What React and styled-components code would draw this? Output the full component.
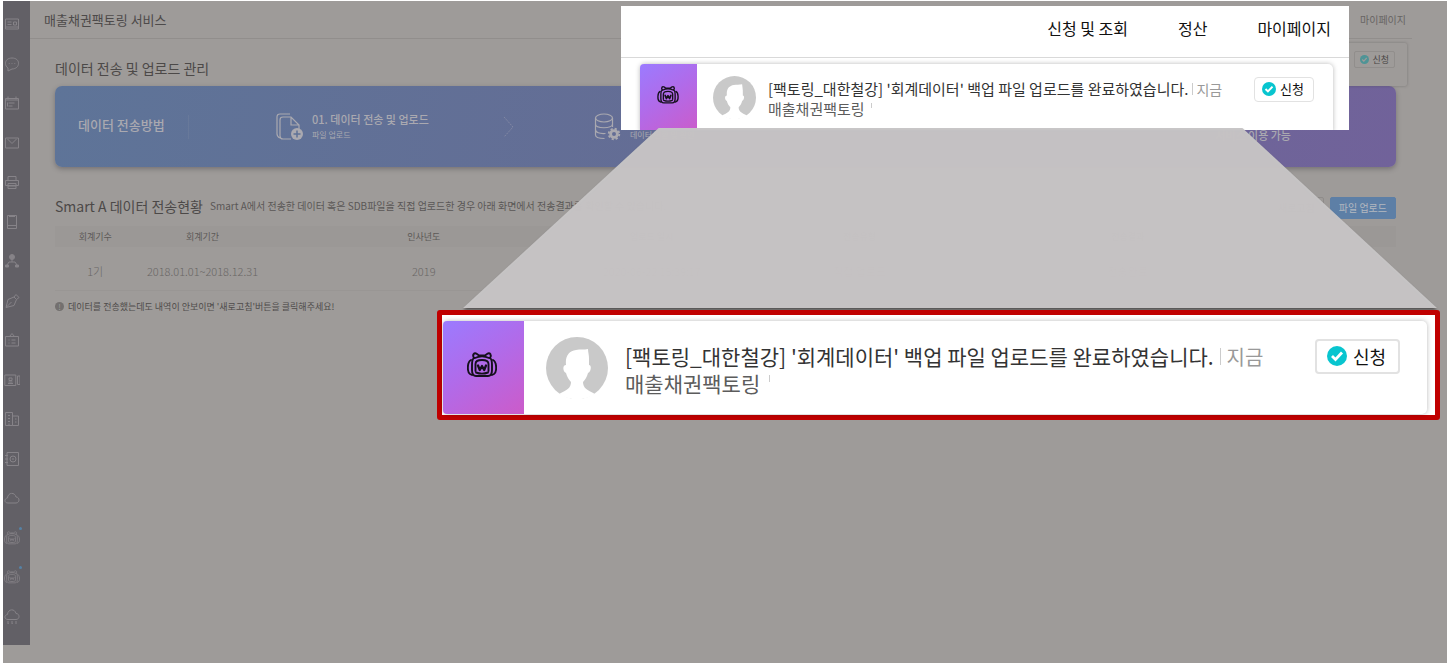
import React from "react";
import styled, { createGlobalStyle } from "styled-components";

const GlobalStyle = createGlobalStyle`
  * {
    box-sizing: border-box;
  }

  body {
    margin: 0;
    background: #fff;
    font-family: "Noto Sans CJK KR", "Noto Sans", sans-serif;
  }

  button {
    font-family: inherit;
    margin: 0;
  }
`;

const Page = styled.div`
  position: relative;
  display: flex;
  align-items: flex-start;
  min-height: calc(100vh - 1px);
  margin: 1px 1px 0 3px;
  background: #9e9b99;
  overflow: hidden;
`;

const Sidebar = styled.nav`
  display: flex;
  flex-direction: column;
  justify-content: space-between;
  flex: none;
  width: 27px;
  height: calc(100vh - 19px);
  padding: 15px 0 20px 1px;
  background: #626066;
`;

const SideLink = styled.a`
  position: relative;
  display: block;
  width: 17px;
  height: 16px;
  color: #868388;

  svg {
    display: block;
    width: 16px;
    height: 16px;
  }
`;

const Dot = styled.span`
  position: absolute;
  top: -3px;
  right: -1px;
  width: 3px;
  height: 3px;
  border-radius: 50%;
  background: #5582a6;
`;

const Main = styled.main`
  flex: 1;
  min-width: 0;
`;

const TopBar = styled.header`
  display: flex;
  align-items: center;
  justify-content: space-between;
  height: 38px;
  margin-right: 35px;
  padding: 0 6px 0 14px;
  border-bottom: 1px solid #918e8c;
  color: #4d4a4a;
  font-size: 13px;

  a {
    color: #676463;
    font-size: 10px;
    text-decoration: none;
  }
`;

const Content = styled.div`
  padding: 19px 51px 0 25px;
`;

const Title = styled.h1`
  margin: 0 0 8px;
  color: #4c4948;
  font-size: 14px;
  font-weight: 400;
  line-height: 20px;
`;

const Banner = styled.section`
  display: flex;
  align-items: center;
  height: 81px;
  padding: 0 105px 0 23px;
  border-radius: 7px;
  background: linear-gradient(100deg, #5e7498 0%, #646d95 45%, #71629a 100%);
  box-shadow: 0 2px 5px rgba(60, 55, 60, 0.4);
  color: #aaa9b0;
`;

const BannerLabel = styled.strong`
  flex: none;
  width: 111px;
  margin-right: 87px;
  padding-bottom: 4px;
  border-right: 1px solid #68799a;
  font-size: 13px;
  font-weight: 500;
  line-height: 20px;
  white-space: nowrap;
`;

const Step = styled.div`
  display: flex;
  align-items: center;
  flex: none;
  gap: 9px;
  width: 227px;

  svg {
    flex: none;
    width: 27px;
    height: 28px;
  }

  h3 {
    margin: 0;
    font-size: 11px;
    font-weight: 500;
    line-height: 17px;
  }

  p {
    margin: 0;
    font-size: 8px;
    line-height: 14px;
  }
`;

const Chevron = styled.svg`
  flex: none;
  width: 12px;
  height: 24px;
  margin-right: 79px;
`;

const BannerEnd = styled.p`
  margin: 18px 0 0 auto;
  font-size: 11px;
  font-weight: 500;
  line-height: 17px;
  white-space: nowrap;
`;

const SectionHead = styled.div`
  display: flex;
  align-items: center;
  height: 22px;
  margin-top: 30px;

  h2 {
    margin: 0 7px 0 0;
    padding-bottom: 4px;
    color: #4c4948;
    font-size: 14px;
    font-weight: 400;
    line-height: 20px;
    white-space: nowrap;
  }

  p {
    flex: 1;
    margin: 0;
    padding-bottom: 4px;
    color: #5a5756;
    font-size: 10px;
    line-height: 16px;
    white-space: nowrap;
  }
`;

const HeadButton = styled.button`
  height: 22px;
  margin-left: 6px;
  padding: 0 8px;
  border: 1px solid ${(props) => (props.$primary ? "#5d7fa6" : "#8f8c8a")};
  border-radius: 2px;
  background: ${(props) => (props.$primary ? "#5d7fa6" : "transparent")};
  color: ${(props) => (props.$primary ? "#b3b8c0" : "#5a5756")};
  font-size: 10px;
  line-height: 20px;
`;

const DataTable = styled.table`
  width: 100%;
  margin-top: 7px;
  border-collapse: collapse;
  table-layout: fixed;
  text-align: center;

  th {
    height: 21px;
    padding: 0;
    background: #9b9896;
    color: #5b5857;
    font-size: 9px;
    font-weight: 400;
  }

  td {
    height: 43px;
    padding: 5px 0 0;
    border-bottom: 1px solid #999694;
    color: #6a6766;
    font-size: 11px;
    font-weight: 300;
  }
`;

const Note = styled.p`
  display: flex;
  align-items: center;
  gap: 4px;
  margin: 9px 0 0;
  color: #4f4c4b;
  font-size: 9px;
  line-height: 14px;
`;

const NoteMark = styled.span`
  width: 9px;
  height: 9px;
  border-radius: 50%;
  background: #73706f;
  color: #9e9b99;
  font-size: 8px;
  line-height: 9px;
  text-align: center;
`;

const DimCard = styled.div`
  position: absolute;
  top: 42px;
  right: 40px;
  width: 360px;
  height: 43px;
  padding: 8px 12px;
  border-radius: 2px;
  background: #9e9b99;
  box-shadow: 0 0 3px rgba(70, 66, 64, 0.4);
  line-height: 16px;
  text-align: right;
`;

const DimButton = styled.button`
  display: inline-flex;
  align-items: center;
  gap: 3px;
  height: 17px;
  padding: 0 5px;
  border: 1px solid #918e8c;
  border-radius: 2px;
  background: transparent;
  color: #4a4746;
  font-size: 9px;
  line-height: 12px;
  vertical-align: top;

  svg {
    width: 9px;
    height: 9px;
  }
`;

const Popup = styled.section`
  position: absolute;
  top: 5px;
  left: 618px;
  right: 98px;
  height: 124px;
  padding: 0 16px 0 19px;
  background: #fff;
  overflow: hidden;
`;

const PopupMenu = styled.nav`
  display: flex;
  align-items: center;
  justify-content: flex-end;
  gap: 50px;
  height: 52px;
  margin: 0 -16px 6px -19px;
  padding: 0 18px 8px;
  border-bottom: 1px solid #d9d9d9;

  a {
    color: #111;
    font-size: 16px;
    text-decoration: none;
  }
`;

const Beam = styled.svg`
  position: absolute;
  top: 127px;
  left: 460px;
  width: calc(100% - 470px);
  height: 180px;
  filter: drop-shadow(0 2px 1px rgba(60, 58, 58, 0.75));
`;

const Magnified = styled.section`
  position: absolute;
  top: 309px;
  left: 434px;
  right: 7px;
  height: 110px;
  padding: 6px 8px 0 1px;
  border: 5px solid #c00000;
  border-radius: 3px;
  background: #fff;
`;

const Card = styled.article`
  display: flex;
  height: ${(props) => (props.$large ? 93 : 70)}px;
  border-radius: 5px;
  background: #fff;
  box-shadow: 0 0 5px rgba(0, 0, 0, 0.28);
`;

const Brand = styled.div`
  display: flex;
  align-items: center;
  justify-content: center;
  flex: none;
  width: ${(props) => (props.$large ? 81 : 57)}px;
  border-radius: 4px 0 0 4px;
  background: linear-gradient(145deg, #9b7bff 0%, #b06bea 45%, #cc5bc9 100%);
  color: #15101c;

  svg {
    width: ${(props) => (props.$large ? 30 : 22)}px;
    height: ${(props) => (props.$large ? 28 : 20)}px;
    margin: ${(props) => (props.$large ? "0 3px 6px 0" : "0 2px 8px 0")};
  }
`;

const Avatar = styled.svg`
  flex: none;
  width: ${(props) => (props.$large ? 62 : 43)}px;
  height: ${(props) => (props.$large ? 62 : 43)}px;
  margin: ${(props) => (props.$large ? "16px 17px 0 22px" : "12px 12px 0 16px")};
`;

const Message = styled.div`
  flex: 1;
  padding-top: ${(props) => (props.$large ? 22 : 15)}px;
  font-size: ${(props) => (props.$large ? 21 : 15)}px;
  line-height: ${(props) => (props.$large ? 27 : 19)}px;
  white-space: nowrap;

  p {
    margin: 0;
    color: #333;
  }

  p + p {
    color: #5c5c5c;
  }

  time {
    margin-left: ${(props) => (props.$large ? 6 : 4)}px;
    padding-left: ${(props) => (props.$large ? 7 : 4)}px;
    background: linear-gradient(#ccc, #ccc) left center / 1px 60% no-repeat;
    color: #999;
    font-size: ${(props) => (props.$large ? 20 : 14)}px;
  }
`;

const Tick = styled.span`
  display: inline-block;
  width: 1px;
  height: ${(props) => (props.$large ? 7 : 5)}px;
  margin-left: ${(props) => (props.$large ? 9 : 6)}px;
  background: #ccc;
  vertical-align: ${(props) => (props.$large ? 10 : 7)}px;
`;

const ApplyButton = styled.button`
  display: flex;
  align-items: center;
  justify-content: center;
  flex: none;
  gap: ${(props) => (props.$large ? 6 : 4)}px;
  width: ${(props) => (props.$large ? 85 : 60)}px;
  height: ${(props) => (props.$large ? 35 : 25)}px;
  margin: ${(props) => (props.$large ? "18px 27px 0 0" : "13px 19px 0 0")};
  padding: 0 2px 2px 0;
  border: ${(props) => (props.$large ? 2 : 1)}px solid #e2e2e2;
  border-radius: 4px;
  background: #fff;
  color: #111;
  font-size: ${(props) => (props.$large ? 18 : 13)}px;
  line-height: 20px;

  svg {
    width: ${(props) => (props.$large ? 20 : 14)}px;
    height: ${(props) => (props.$large ? 20 : 14)}px;
  }
`;

function BearIcon({ thin }) {
  return (
    <svg viewBox="0 0 30 28" fill="none" stroke="currentColor" strokeWidth={thin ? 1.5 : 1.9} strokeLinecap="round" strokeLinejoin="round">
      <path d="M7 7c-2-3 0-6 3-4l2 1.500h6L20 3c3-2 5 1 3 4" />
      <path d="M7 7c-2 1-2 4-2 7v5c0 3 1 6 4 6h12c3 0 4-3 4-6v-5c0-3 0-6-2-7" />
      <path d="M8.500 20v-7c0-3 2-4 6.500-4s6.500 1 6.500 4v7M8 7c4-2 10-2 14 0" />
      <path d="M4 9c-4 2-4 12-1 14l2 1M26 9c4 2 4 12 1 14l-2 1" />
      <path d="M11 14.500l1.800 4.500 2.200-4 2.200 4 1.800-4.500" strokeWidth={thin ? 1.5 : 2.3} />
      <path d="M9 21.500c4 1.500 8 1.500 12 0" />
    </svg>
  );
}

// outline icons of the side menu, all on a 16px grid
const shapes = {
  board: <path d="M1.500 3h13v10h-13zM3.500 6h4M3.500 8.500h4M9.500 6h3v3h-3zM1.500 11h13" />,
  chat: <path d="M8 2c4 0 6.500 2.200 6.500 5.300S12 13 8 13l-4 2v-3C2.300 11 1.500 9.300 1.500 7.300 1.500 4.200 4 2 8 2zM4.800 7.500h.8M7.600 7.500h.8M10.400 7.500h.8" />,
  calendar: <path d="M1.500 3.500h13v10.500h-13zM1.500 5h13M4 1.500v3M12 1.500v3M4.500 8h6M4.500 11h4M3.500 7.500v4" />,
  mail: <path d="M1.500 3h13v10h-13zM3.500 4l4.500 4.500L12.500 4" />,
  printer: <path d="M4 6V2.500h8V6M1.500 6.500h13v5h-13zM4 9.500h8v5H4zM4 12h8" />,
  phone: <path d="M3.500 1.500h9v13h-9zM3.500 11.500h9M5 2.500h6" />,
  tree: (
    <>
      <path d="M8 6v3M3 12l2-3h6l2 3" />
      <circle cx="8" cy="4" r="2.500" fill="currentColor" />
      <path d="M1.500 12h3v2h-3zM11.500 12h3v2h-3z" fill="currentColor" />
    </>
  ),
  pen: <path d="M2 14.500l2-8 6-2.500 2.500 2.500-2.500 6zM2.500 14l5-5M10 4l2-2.500 3 3-2.500 2" />,
  board2: <path d="M1.500 4.500h13v9.500h-13zM5.500 4.500L8 1.500l2.500 3M4.500 8h1M7.500 8h4M4.500 11h1M7.500 11h4" />,
  video: <path d="M.8 3h11v10.500H.8zM13.500 4H16v8.500h-2.500zM4 11.500h5M5 6h3v2.500H5zM4.500 10h4" />,
  building: <path d="M1.500 1.500h7v13h-7zM8.500 5h6v9.500h-6zM4 4.500h2M4 7.500h2M4 10.500h2M11 8h1.500M11 11h1.500M5 12.500v2" />,
  address: (
    <>
      <path d="M3 1.500h11.500v13H3zM1 4.500h3M1 8h3M1 11.500h3" />
      <circle cx="9" cy="8" r="3" />
      <path d="M8 8h2" />
    </>
  ),
  cloud: <path d="M4 13C0 13 0 8.500 3.500 8 4 2 11 2 12 7c4 0 4 6 0 6z" />,
  rain: <path d="M4 10.500C0 10.500 0 6 3.500 5.500 4-.5 11-.5 12 4.500c4 0 4 6 0 6zM4 12v3M8 12v3M12 12v3M4 14.500h.5M8 14.500h.5" />,
};

function MenuIcon({ name }) {
  if (name === "bear") {
    return <BearIcon thin />;
  }
  return (
    <svg viewBox="0 0 16 16" fill="none" stroke="currentColor" strokeWidth="1">
      {shapes[name]}
    </svg>
  );
}

function CheckIcon({ color = "#08c5cf", mark = "#fff" }) {
  return (
    <svg viewBox="0 0 20 20">
      <circle cx="10" cy="10" r="10" fill={color} />
      <path d="M5 10l3.500 3.500 6.500-7" fill="none" stroke={mark} strokeWidth="2.800" />
    </svg>
  );
}

function FileIcon() {
  return (
    <svg viewBox="0 0 27 28" fill="none" stroke="currentColor" strokeWidth="1.200">
      <path d="M14 1H4C2 1 1 2 1 4v17c0 2 1 3 3 4" />
      <path d="M15 26H7c-2 0-3-1-3-3V7c0-2 1-3 3-3h8l8 8v4M15 4v8h8" />
      <circle cx="21" cy="21" r="6" fill="currentColor" stroke="none" />
      <path d="M21 17.500v7M17.500 21h7" stroke="#5f7296" strokeWidth="1.500" />
    </svg>
  );
}

function DatabaseIcon() {
  return (
    <svg viewBox="0 0 27 28" fill="none" stroke="currentColor" strokeWidth="1.200">
      <ellipse cx="10" cy="5" rx="8.500" ry="4" />
      <path d="M1.500 5v17c0 2 3 3.500 9 3.500M18.500 5v9M1.500 11c0 5 17 5 17 0M1.500 16.500c0 3 4 4.500 10 4" />
      <circle cx="20" cy="21" r="3.400" strokeWidth="2.800" />
      <circle cx="20" cy="21" r="5.300" strokeWidth="1.800" strokeDasharray="2.200 1.960" />
    </svg>
  );
}

function Profile({ large }) {
  return (
    <Avatar $large={large} viewBox="0 0 62 62">
      <circle cx="31" cy="31" r="31" fill="#c9c9c9" />
      <path
        d="M20 28c-1-9 3-14 10-15 4-1 8 0 12-1 0 3 1 6 1 9v7c3 0 2 7-1 8-1 4-3 7-5 9 0 6 4 8 12 12-9 7-27 7-36 0 8-4 12-6 12-12-2-2-4-5-5-9-3-1-4-8 0-8z"
        fill="#fff"
      />
    </Avatar>
  );
}

function Notice({ large }) {
  return (
    <Card $large={large}>
      <Brand $large={large}>
        <BearIcon />
      </Brand>
      <Profile large={large} />
      <Message $large={large}>
        <p>
          [팩토링_대한철강] '회계데이터' 백업 파일 업로드를 완료하였습니다.
          <time>지금</time>
        </p>
        <p>
          매출채권팩토링
          <Tick $large={large} />
        </p>
      </Message>
      <ApplyButton type="button" $large={large}>
        <CheckIcon />
        신청
      </ApplyButton>
    </Card>
  );
}

const menus = [
  { icon: "board", label: "게시판" },
  { icon: "chat", label: "대화" },
  { icon: "calendar", label: "일정" },
  { icon: "mail", label: "메일" },
  { icon: "printer", label: "팩스" },
  { icon: "phone", label: "문자" },
  { icon: "tree", label: "조직도" },
  { icon: "pen", label: "전자결재" },
  { icon: "board2", label: "업무" },
  { icon: "video", label: "화상회의" },
  { icon: "building", label: "회사" },
  { icon: "address", label: "주소록" },
  { icon: "cloud", label: "클라우드" },
  { icon: "bear", label: "위하고", dot: true },
  { icon: "bear", label: "위하고 T", dot: true },
  { icon: "rain", label: "날씨" },
];

const columns = [
  { name: "회계기수", width: "6%" },
  { name: "회계기간", width: "10%" },
  { name: "인사년도", width: "23%" },
  { name: "업로드 일시", width: "11%" },
  { name: "전송유형", width: "20%" },
  { name: "전송결과", width: "20%" },
  { name: "", width: "10%" },
];

const row = ["1기", "2018.01.01~2018.12.31", "2019", "2020-06-22 15:39:17", "직접 업로드", "전송완료", ""];

export default function App() {
  return (
    <>
      <GlobalStyle />
      <Page>
        <Sidebar>
          {menus.map(({ icon, label, dot }) => (
            <SideLink href="#" key={label} aria-label={label}>
              <MenuIcon name={icon} />
              {dot && <Dot />}
            </SideLink>
          ))}
        </Sidebar>

        <Main>
          <TopBar>
            매출채권팩토링 서비스
            <a href="#">마이페이지</a>
          </TopBar>

          <Content>
            <Title>데이터 전송 및 업로드 관리</Title>
            <Banner>
              <BannerLabel>데이터 전송방법</BannerLabel>
              <Step>
                <FileIcon />
                <div>
                  <h3>01. 데이터 전송 및 업로드</h3>
                  <p>파일 업로드</p>
                </div>
              </Step>
              <Chevron viewBox="0 0 12 24" fill="none" stroke="#8288a4" strokeDasharray="2 1">
                <path d="M1 2l9 10-9 10" />
              </Chevron>
              <Step>
                <DatabaseIcon />
                <div>
                  <h3>02. 데이터 변환</h3>
                  <p>데이터 변환 및 확인</p>
                </div>
              </Step>
              <BannerEnd>서비스 이용 가능</BannerEnd>
            </Banner>

            <SectionHead>
              <h2>Smart A 데이터 전송현황</h2>
              <p>
                Smart A에서 전송한 데이터 혹은 SDB파일을 직접 업로드한 경우 아래 화면에서 전송결과를 확인할 수 있습니다.
              </p>
              <HeadButton type="button">새로고침</HeadButton>
              <HeadButton type="button" $primary>
                파일 업로드
              </HeadButton>
            </SectionHead>

            <DataTable>
              <thead>
                <tr>
                  {columns.map(({ name, width }) => (
                    <th key={name} width={width}>{name}</th>
                  ))}
                </tr>
              </thead>
              <tbody>
                <tr>
                  {row.map((value, index) => (
                    <td key={index}>{value}</td>
                  ))}
                </tr>
              </tbody>
            </DataTable>

            <Note>
              <NoteMark>!</NoteMark>
              데이터를 전송했는데도 내역이 안보이면 '새로고침'버튼을 클릭해주세요!
            </Note>
          </Content>
        </Main>

        <DimCard>
          <DimButton type="button">
            <CheckIcon color="#4f9496" mark="#9e9b99" />
            신청
          </DimButton>
        </DimCard>

        <Popup>
          <PopupMenu>
            <a href="#">신청 및 조회</a>
            <a href="#">정산</a>
            <a href="#">마이페이지</a>
          </PopupMenu>
          <Notice />
        </Popup>

        <Beam viewBox="0 0 976 180" preserveAspectRatio="none">
          <path d="M196 0H781L976 180H0z" fill="#c7c5c6" fillOpacity="0.98" />
        </Beam>

        <Magnified>
          <Notice large />
        </Magnified>
      </Page>
    </>
  );
}
